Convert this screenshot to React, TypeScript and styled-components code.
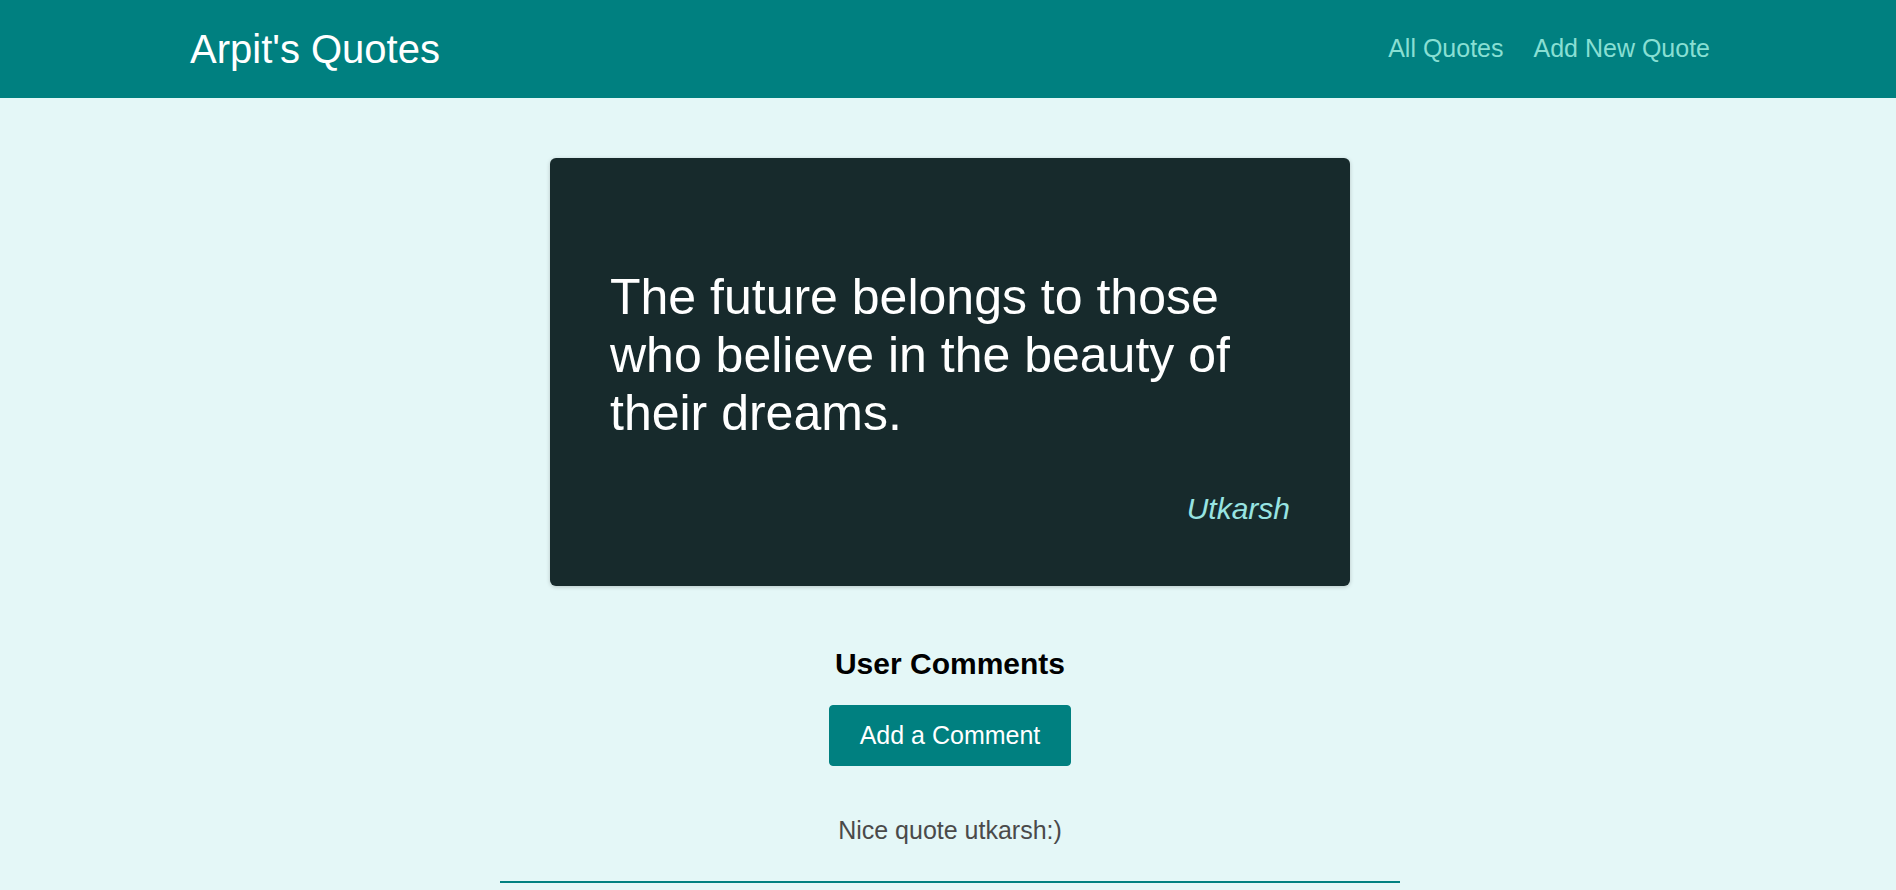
import React from "react";
import styled, { createGlobalStyle } from "styled-components";

const GlobalStyle = createGlobalStyle`
  * { box-sizing: border-box; }
  html { font-size: 20px; }
  body {
    margin: 0;
    overflow-x: hidden;
    font-family: "Liberation Sans", Arial, sans-serif;
    background-color: #e4f7f7;
  }
`;

const Page = styled.div`
  width: calc(100% + 4px);
`;

const Header = styled.header`
  width: 100%;
  height: 98px;
  display: flex;
  justify-content: space-between;
  align-items: center;
  background-color: #008080;
  padding: 0 10%;
`;

const Logo = styled.div`
  font-size: 40px;
  color: #ffffff;
`;

const NavList = styled.ul`
  list-style: none;
  margin: 0 0 2px;
  padding: 0;
  display: flex;
  align-items: center;
  gap: 30px;
`;

const NavLink = styled.a<{ $active?: boolean }>`
  text-decoration: none;
  font-size: 25px;
  color: ${(p) => (p.$active ? "#e6fcfc" : "#88dfd3")};
  cursor: pointer;
`;

const Main = styled.main`
  display: flex;
  flex-direction: column;
  align-items: center;
`;

const QuoteCard = styled.figure`
  background-color: #172a2c;
  color: #ffffff;
  border-radius: 6px;
  padding: 60px;
  margin: 60px auto 0;
  width: 90%;
  max-width: 800px;
  box-shadow: 0 1px 4px rgba(0, 0, 0, 0.2);
`;

const QuoteText = styled.p`
  font-size: 50px;
  margin: 50px 0;
`;

const Author = styled.figcaption`
  font-style: italic;
  font-size: 30px;
  text-align: right;
  color: #98e4e2;
`;

const Comments = styled.section`
  text-align: center;
  width: 100%;
`;

const CommentsTitle = styled.h2`
  font-size: 30px;
  font-weight: bold;
  color: #000000;
  margin: 60px 0 24px;
  line-height: 35px;
`;

const Button = styled.button`
  cursor: pointer;
  font: inherit;
  font-size: 25px;
  line-height: 29px;
  padding: 15px 30px;
  border: 1px solid #008080;
  border-radius: 4px;
  background-color: #008080;
  color: #ffffff;
`;

const CommentList = styled.ul`
  list-style: none;
  margin: 50px auto 0;
  padding: 0;
  width: 90%;
  max-width: 900px;
`;

const CommentItem = styled.li`
  border-bottom: 2px solid #008080;
  padding: 0 0 36px;
`;

const CommentText = styled.p`
  margin: 0;
  font-size: 25px;
  color: #4a4a4a;
`;

export default function App() {
  return (
    <Page>
      <GlobalStyle />
      <Header>
        <Logo>Arpit's Quotes</Logo>
        <nav>
          <NavList>
            <li>
              <NavLink>All Quotes</NavLink>
            </li>
            <li>
              <NavLink>Add New Quote</NavLink>
            </li>
          </NavList>
        </nav>
      </Header>
      <Main>
        <QuoteCard>
          <QuoteText>
            The future belongs to those who believe in the beauty of their dreams.
          </QuoteText>
          <Author>Utkarsh</Author>
        </QuoteCard>
        <Comments>
          <CommentsTitle>User Comments</CommentsTitle>
          <Button>Add a Comment</Button>
          <CommentList>
            <CommentItem>
              <CommentText>Nice quote utkarsh:)</CommentText>
            </CommentItem>
          </CommentList>
        </Comments>
      </Main>
    </Page>
  );
}
